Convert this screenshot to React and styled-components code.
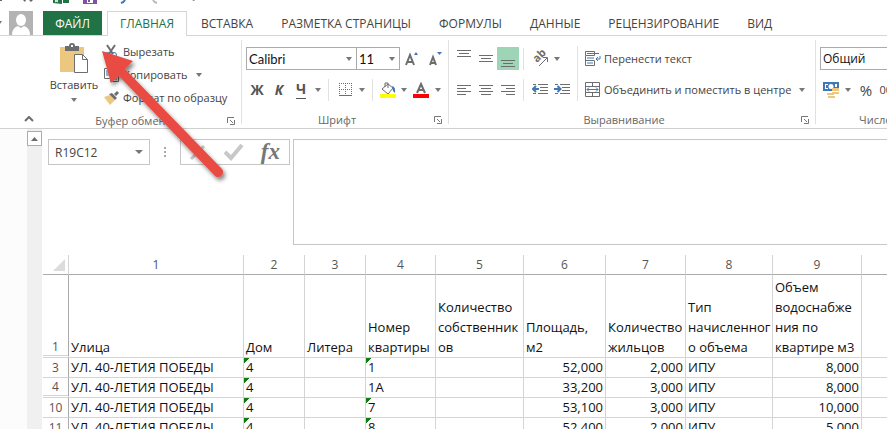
import React from 'react';
import styled, { createGlobalStyle } from 'styled-components';

const ui = '"Open Sans", "Noto Sans", sans-serif';
const gray = '#6d6d6d';
const blue = '#3f78b5';

const GlobalStyle = createGlobalStyle`
  * { box-sizing: border-box; }
  body { margin: 0; background: #fff; font-family: ${ui}; color: #444; }
  button, select, input, textarea { font: inherit; color: inherit; margin: 0; border-radius: 0; }
  button { border: 0; padding: 0; background: none; }
  svg { display: block; flex: none; }
`;

const Shell = styled.div`
  position: relative;
  display: flex;
  flex-direction: column;
  height: 100vh;
  overflow: hidden;
`;
const QuickAccess = styled.div`
  height: 11px;
  flex: none;
  overflow: hidden;
`;
const TabBar = styled.nav`
  display: flex;
  flex: none;
  height: 25px;
  border-bottom: 1px solid #d5d5d5;
  font-size: 12px;
  white-space: nowrap;
`;
const Account = styled.button`
  display: flex;
  align-items: flex-start;
  width: 43px;
  flex: none;
`;
const FileTab = styled.button`
  width: 59px;
  flex: none;
  background: #217346;
  color: #fff;
`;
const Tab = styled.button`
  flex: none;
  height: 25px;
  padding: 0 14px 1px;
  ${p => p.$active && `
    margin-left: 5px;
    width: 80px;
    padding: 0 0 2px;
    color: #217346;
    background: #fff;
    border: 1px solid #d5d5d5;
    border-bottom: 0;
  `}
`;
const Ribbon = styled.section`
  display: flex;
  flex: none;
  height: 93px;
  border-bottom: 1px solid #d0d0d0;
  font-size: 11px;
  white-space: nowrap;
  overflow: hidden;
`;
const CollapseSlot = styled.div`
  display: flex;
  align-items: flex-end;
  justify-content: flex-end;
  width: 42px;
  flex: none;
  padding: 0 8px 6px 0;
`;
const Group = styled.div`
  display: flex;
  flex-direction: column;
  flex: none;
  width: ${p => p.$width}px;
  margin: 4px 0;
  border-right: 1px solid #e1e1e1;
`;
const GroupBody = styled.div`
  display: flex;
  flex: 1;
  padding-left: 4px;
`;
const GroupFooter = styled.div`
  display: grid;
  grid-template-columns: 1fr 16px;
  align-items: center;
  height: 16px;
  color: #666;
  text-align: center;
`;
const Column = styled.div`
  display: flex;
  flex-direction: column;
`;
const Row = styled.div`
  display: flex;
  align-items: center;
  height: ${p => p.$height}px;
`;
const IconButton = styled.button`
  display: flex;
  align-items: center;
  justify-content: center;
  flex: none;
  width: ${p => p.$width || 22}px;
  height: 23px;
  background: ${p => (p.$on ? '#9fd5b7' : 'transparent')};
`;
const LabelButton = styled.button`
  display: flex;
  align-items: center;
  gap: 4px;
  height: 23px;
`;
const IconSlot = styled.span`
  display: flex;
  width: 15px;
`;
const PasteButton = styled.button`
  display: flex;
  flex-direction: column;
  align-items: center;
  width: 56px;
  padding-top: 3px;
  margin-right: 2px;
`;
const PasteLabel = styled.span`
  margin: 2px 0 4px;
  line-height: 18px;
`;
const Divider = styled.span`
  width: 1px;
  height: 22px;
  margin: 0 5px 0 4px;
  background: #e1e1e1;
`;
const WrapRule = styled.span`
  width: 1px;
  height: 55px;
  margin: 6px 7px 0 4px;
  background: #e1e1e1;
`;
const Letter = styled.span`
  font-size: 14px;
  line-height: 18px;
  font-weight: 700;
  font-style: ${p => (p.$italic ? 'italic' : 'normal')};
  border-bottom: ${p => (p.$underline ? '1px solid #555' : '0')};
  color: #555;
`;
const Percent = styled.span`font-size: 15px;`;
const Zeros = styled.span`font-size: 11px;`;
const Combo = styled.div`
  display: grid;
  align-items: center;
  flex: none;
  width: ${p => p.$width}px;
  height: 23px;
  border: 1px solid #ababab;
  margin-right: -1px;
  > * { grid-area: 1 / 1; }
  > svg { justify-self: end; margin-right: 4px; pointer-events: none; }
`;
const ComboSelect = styled.select`
  appearance: none;
  width: 100%;
  height: 21px;
  border: 0;
  padding: 0 2px;
  background: #fff;
  color: #111;
  font-family: ${p => (p.$wide ? ui : 'Lato, "Open Sans", sans-serif')};
  font-size: ${p => (p.$wide ? 12 : 13)}px;
`;
const Work = styled.main`
  display: flex;
  flex: 1;
  min-height: 0;
`;
const Gutter = styled.div`
  width: 27px;
  flex: none;
  background: #fcfcfc;
`;
const Scroller = styled.div`
  width: 15px;
  flex: none;
  padding-top: 2px;
  background: #f0f0f0;
`;
const ScrollUp = styled.button`
  display: flex;
  align-items: center;
  justify-content: center;
  width: 15px;
  height: 15px;
  background: #fff;
  border: 1px solid #ababab;
`;
const Book = styled.div`
  flex: 1;
  min-width: 0;
`;
const FormulaBar = styled.div`
  display: flex;
  align-items: flex-start;
  padding: 10px 0 10px 6px;
`;
const NameBox = styled.div`
  display: flex;
  align-items: center;
  width: 102px;
  height: 26px;
  flex: none;
  padding-right: 6px;
  border: 1px solid #c6c6c6;
`;
const NameInput = styled.input`
  flex: 1;
  min-width: 0;
  border: 0;
  padding: 0 6px;
  background: none;
  font-size: 12px;
`;
const Grip = styled.span`
  display: flex;
  justify-content: center;
  width: 30px;
  padding-top: 8px;
  flex: none;
`;
const FormulaButtons = styled.div`
  display: flex;
  align-items: center;
  justify-content: space-between;
  width: 110px;
  height: 26px;
  flex: none;
  padding: 0 9px 0 7px;
  margin-right: 3px;
  border: 1px solid #c6c6c6;
`;
const FxButton = styled.button`
  font: italic 700 23px/22px "Liberation Serif", serif;
  color: #777;
`;
const FormulaText = styled.textarea`
  flex: 1;
  min-width: 0;
  height: 106px;
  border: 1px solid #c6c6c6;
  border-right: 0;
  resize: none;
`;
const Sheet = styled.table`
  width: 100%;
  margin-left: 1px;
  table-layout: fixed;
  border-collapse: separate;
  border-spacing: 0;
  font-size: 13px;
  color: #111;
`;
const Col = styled.col`width: ${p => (p.$width ? `${p.$width}px` : 'auto')};`;
const ColHead = styled.th`
  height: 20px;
  padding: 0;
  font-size: 12px;
  line-height: 19px;
  font-weight: 400;
  color: #555;
  border-right: 1px solid #d4d4d4;
  border-bottom: 1px solid #ababab;
`;
const Corner = styled(ColHead)`
  > svg { margin: 0 3px 0 auto; }
`;
const RowHead = styled.th`
  padding: 0;
  vertical-align: bottom;
  font-size: 12px;
  font-weight: 400;
  color: #555;
  border-right: 1px solid #ababab;
  border-bottom: ${p => (p.$gap ? '3px double' : '1px solid')} #d4d4d4;
  line-height: ${p => (p.$gap ? 17 : 19)}px;
`;
const Cell = styled.td`
  height: ${p => (p.$tall ? 83 : 20)}px;
  padding: 0 2px;
  vertical-align: bottom;
  line-height: ${p => (p.$tall ? 20 : 19)}px;
  text-align: ${p => (p.$num ? 'right' : 'left')};
  white-space: ${p => (p.$tall ? 'pre' : 'nowrap')};
  border-right: 1px solid #d4d4d4;
  border-bottom: 1px solid #d4d4d4;
  background: ${p => (p.$flag ? 'linear-gradient(135deg, #107c10 4px, transparent 4px) no-repeat' : 'none')};
`;
const Pointer = styled.svg`
  position: absolute;
  left: 94px;
  top: 44px;
  pointer-events: none;
`;

const Caret = () => (
  <svg width="6" height="4" viewBox="0 0 6 4"><path d="M0 0h6L3 4z" fill="#777" /></svg>
);
const Footer = ({ children }) => (
  <GroupFooter>
    <span>{children}</span>
    <IconButton $width={12} aria-label="Параметры группы">
      <svg width="8" height="8" viewBox="0 0 8 8"><path d="M.5 6V.5H7M3 3l3 3M7.5 3v4.500H3" fill="none" stroke="#777" /></svg>
    </IconButton>
  </GroupFooter>
);
const Lines = ({ rows, top = 0 }) => (
  <svg width="14" height="18" viewBox="0 0 14 18">
    {rows.map(([x, w], i) => <path key={i} d={`M${x} ${top + i * 3 + 0.5}h${w}`} stroke={gray} />)}
  </svg>
);
const Indent = ({ right }) => (
  <svg width="16" height="11" viewBox="0 0 16 11">
    <path d="M1 .5h3M6 .5h10M8 3.500h8M8 6.500h8M1 9.500h3M6 9.500h10" stroke={gray} />
    <path d={right ? 'M0 5h6M3.500 2L6.500 5 3.500 8' : 'M1 5h6M4 2L1 5l3 3'} fill="none" stroke={blue} strokeWidth="2" />
  </svg>
);
const edge = [[0, 14], [2, 10], [0, 14]];
const justify = [
  ['По левому краю', [[0, 14], [0, 9], [0, 14], [0, 9]]],
  ['По центру', [[0, 14], [2, 10], [0, 14], [2, 10]]],
  ['По правому краю', [[0, 14], [5, 9], [0, 14], [5, 9]]],
];

const tabs = ['ВСТАВКА', 'РАЗМЕТКА СТРАНИЦЫ', 'ФОРМУЛЫ', 'ДАННЫЕ', 'РЕЦЕНЗИРОВАНИЕ', 'ВИД'];
const widths = [26, 175, 61, 61, 70, 88, 82, 80, 87, 89, 0];
const heads = ['Улица', 'Дом', 'Литера', 'Номер\nквартиры', 'Количество\nсобственник\nов', 'Площадь,\nм2', 'Количество\nжильцов', 'Тип\nначисленног\nо объема', 'Объем\nводоснабже\nния по\nквартире м3', ''];
const rows = [
  [3, '1', '52,000', '2,000', '8,000'],
  [4, '1А', '33,200', '3,000', '8,000'],
  [10, '7', '53,100', '3,000', '10,000'],
  [11, '8', '52,400', '2,000', '5,000'],
];

export default function App() {
  return (
    <Shell>
      <GlobalStyle />
      <QuickAccess>
        <svg width="210" height="11" viewBox="0 0 210 11">
          <path d="M0 0h2v1H0zM23 0h3l-1 2zM29 0h4l-2 2z" fill="#666" />
          <path d="M53 0h9v4l-9-1zM63 0h6v3h-6z" fill="#217346" />
          <path d="M55 0l3 2M58 0l-3 2" stroke="#fff" />
          <path d="M83 0h14v4H83z" fill="#8151a5" /><path d="M87 0h6v3h-6z" fill="#fff" /><path d="M88 0h2v2h-2z" fill="#8151a5" />
          <path d="M125 0q-1 2-4 3" stroke={blue} strokeWidth="2" fill="none" />
          <path d="M153 0q1 2 4 3" stroke="#bbb" strokeWidth="2" fill="none" />
          <path d="M192 0h3l-1 1z" fill="#777" />
        </svg>
      </QuickAccess>

      <TabBar aria-label="Лента">
        <Account aria-label="Учетная запись">
          <svg width="33" height="24" viewBox="0 0 33 24">
            <path d="M0 10h2l-2 3z" fill="#777" />
            <path d="M9 0h24v24H9z" fill="#b3b3b3" />
            <ellipse cx="21" cy="9" rx="5" ry="6" fill="#fff" />
            <path d="M12 24q0-7 6-9l3 2 3-2q6 2 6 9z" fill="#fff" />
          </svg>
        </Account>
        <FileTab>ФАЙЛ</FileTab>
        <Tab $active>ГЛАВНАЯ</Tab>
        {tabs.map(t => <Tab key={t}>{t}</Tab>)}
      </TabBar>

      <Ribbon>
        <CollapseSlot>
          <button aria-label="Свернуть ленту">
            <svg width="10" height="6" viewBox="0 0 10 6"><path d="M1 5l4-4 4 4" fill="none" stroke={gray} strokeWidth="2" /></svg>
          </button>
        </CollapseSlot>

        <Group $width={200}>
          <GroupBody>
            <PasteButton>
              <svg width="28" height="31" viewBox="1 0 28 31">
                <path d="M1 4h24v25H1z" fill="#ecc780" />
                <path d="M6 8V3h4q0-3 3-3t3 3h4v5z" fill={gray} /><path d="M12 2h2v2h-2z" fill="#fff" />
                <path d="M15.500 11.500h8l5 5v13h-13z" fill="#fff" stroke={gray} /><path d="M23.500 11.500v5h5" fill="none" stroke={gray} />
              </svg>
              <PasteLabel>Вставить</PasteLabel>
              <Caret />
            </PasteButton>
            <Column>
              <LabelButton>
                <IconSlot>
                  <svg width="14" height="15" viewBox="0 0 14 15">
                    <path d="M3 1l6 9M11 1L5 10" stroke={gray} strokeWidth="2" />
                    <circle cx="3.500" cy="11" r="2.500" fill="none" stroke={blue} /><circle cx="10" cy="11" r="2.500" fill="none" stroke={blue} />
                  </svg>
                </IconSlot>
                Вырезать
              </LabelButton>
              <Row $height={23}>
                <LabelButton>
                  <IconSlot>
                    <svg width="15" height="14" viewBox="0 0 15 14">
                      <path d="M.5.5h6l2 2v8h-8z" fill="#fff" stroke={gray} /><path d="M2 3h4M2 5h4M2 7h4" stroke={blue} />
                      <path d="M6.500 3.500h5l3 3v7h-8z" fill="#fff" stroke={gray} /><path d="M8 7h4M8 9h5M8 11h5" stroke={blue} />
                    </svg>
                  </IconSlot>
                  Копировать
                </LabelButton>
                <IconButton aria-label="Варианты копирования"><Caret /></IconButton>
              </Row>
              <LabelButton>
                <IconSlot>
                  <svg width="15" height="14" viewBox="0 0 15 14">
                    <path d="M0 6l6-2 5 5-5 5z" fill="#ecc780" /><path d="M5 3l3-1 5 5-2 2zM10 3l3-3 2 2-3 3z" fill={gray} />
                  </svg>
                </IconSlot>
                Формат по образцу
              </LabelButton>
            </Column>
          </GroupBody>
          <Footer>Буфер обмена</Footer>
        </Group>

        <Group $width={207}>
          <GroupBody>
            <Column>
              <Row $height={37}>
                <Combo $width={111}>
                  <ComboSelect aria-label="Шрифт"><option>Calibri</option></ComboSelect><Caret />
                </Combo>
                <Combo $width={44}>
                  <ComboSelect aria-label="Размер шрифта"><option>11</option></ComboSelect><Caret />
                </Combo>
                <IconButton $width={25} aria-label="Увеличить размер шрифта">
                  <svg width="14" height="15" viewBox="0 0 14 15"><path d="M1 14L5 4l4 10M2.500 11h5" fill="none" stroke={gray} strokeWidth="2" /><path d="M9 4l2-3 2 3z" fill={blue} /></svg>
                </IconButton>
                <IconButton $width={22} aria-label="Уменьшить размер шрифта">
                  <svg width="14" height="15" viewBox="0 0 14 15"><path d="M2 14l3-8 3 8M3 12h4" fill="none" stroke={gray} strokeWidth="2" /><path d="M9 1h5l-2.500 3z" fill={blue} /></svg>
                </IconButton>
              </Row>
              <Row $height={25}>
                <IconButton aria-label="Полужирный"><Letter>Ж</Letter></IconButton>
                <IconButton aria-label="Курсив"><Letter $italic>К</Letter></IconButton>
                <IconButton aria-label="Подчеркнутый"><Letter $underline>Ч</Letter></IconButton>
                <IconButton $width={12} aria-label="Вид подчеркивания"><Caret /></IconButton>
                <Divider />
                <IconButton $width={22} aria-label="Границы">
                  <svg width="13" height="13" viewBox="0 0 13 13"><path d="M0 .5h13M0 6.500h13M.5 0v12M6.500 0v12M12.500 0v12" stroke={gray} strokeDasharray="1 1" /><path d="M0 12.500h13" stroke={gray} /></svg>
                </IconButton>
                <IconButton $width={12} aria-label="Вид границ"><Caret /></IconButton>
                <Divider />
                <IconButton $width={20} aria-label="Цвет заливки">
                  <svg width="16" height="16" viewBox="0 0 16 16"><path d="M2 7l6-5 5 4-5 6z" fill="#fff" stroke={gray} /><path d="M5 5V1h3v5" fill="none" stroke={gray} /><path d="M12 4q4 1 3 7l-2-2z" fill={blue} /><path d="M0 12h16v4H0z" fill="#ff0" /></svg>
                </IconButton>
                <IconButton $width={12} aria-label="Палитра заливки"><Caret /></IconButton>
                <IconButton $width={22} aria-label="Цвет текста">
                  <svg width="16" height="16" viewBox="0 0 16 16"><path d="M4 11l4-9 4 9M5.500 8h5" fill="none" stroke={gray} strokeWidth="2" /><path d="M0 12h16v4H0z" fill="red" /></svg>
                </IconButton>
                <IconButton $width={12} aria-label="Палитра текста"><Caret /></IconButton>
              </Row>
            </Column>
          </GroupBody>
          <Footer>Шрифт</Footer>
        </Group>

        <Group $width={367}>
          <GroupBody>
            <Column>
              <Row $height={37}>
                <IconButton aria-label="По верхнему краю"><Lines rows={edge} /></IconButton>
                <IconButton aria-label="По середине"><Lines top={5} rows={edge} /></IconButton>
                <IconButton $on aria-label="По нижнему краю"><Lines top={10} rows={edge} /></IconButton>
                <Divider />
                <IconButton aria-label="Ориентация">
                  <svg width="18" height="17" viewBox="0 0 18 17">
                    <text x="0" y="0" transform="translate(6 13) rotate(-45)" fontSize="11" fontWeight="700" fill={gray}>ab</text>
                    <path d="M8 16l8-8M12 7.500h4.500V12" fill="none" stroke={gray} />
                  </svg>
                </IconButton>
                <IconButton $width={12} aria-label="Вид ориентации"><Caret /></IconButton>
              </Row>
              <Row $height={25}>
                {justify.map(([name, lines]) => <IconButton key={name} aria-label={name}><Lines top={4} rows={lines} /></IconButton>)}
                <Divider />
                <IconButton aria-label="Уменьшить отступ"><Indent /></IconButton>
                <IconButton aria-label="Увеличить отступ"><Indent right /></IconButton>
              </Row>
            </Column>
            <WrapRule />
            <Column>
              <Row $height={37}>
                <LabelButton>
                  <IconSlot>
                    <svg width="16" height="15" viewBox="0 0 16 15"><path d="M.5.5h9v4h-9zM.5 5v9.500h9V10M.5 9.500h9" fill="none" stroke={gray} /><path d="M2 2.500h12M2 7h7M2 12h6M15 5v3h-4M13 6l-2 2 2 2" fill="none" stroke={blue} /></svg>
                  </IconSlot>
                  Перенести текст
                </LabelButton>
              </Row>
              <Row $height={25}>
                <LabelButton>
                  <IconSlot>
                    <svg width="15" height="15" viewBox="0 0 15 15"><path d="M.5.5h14v14H.5zM0 4.500h15M0 10.500h15M7.500 0v4M7.500 11v4" fill="none" stroke={gray} /><path d="M2 7.500h11M4 5.500l-2 2 2 2M11 5.500l2 2-2 2" fill="none" stroke={blue} /></svg>
                  </IconSlot>
                  Объединить и поместить в центре
                </LabelButton>
                <IconButton aria-label="Варианты объединения"><Caret /></IconButton>
              </Row>
            </Column>
          </GroupBody>
          <Footer>Выравнивание</Footer>
        </Group>

        <Group $width={136}>
          <GroupBody>
            <Column>
              <Row $height={37}>
                <Combo $width={116}><ComboSelect $wide aria-label="Числовой формат"><option>Общий</option></ComboSelect><Caret /></Combo>
              </Row>
              <Row $height={25}>
                <IconButton aria-label="Денежный формат">
                  <svg width="17" height="16" viewBox="0 0 17 16"><path d="M0 0h16v9H0z" fill={blue} /><path d="M2 2h3v1H3v3h2v1H2zM14 2v3h-2V2z" fill="#fff" /><circle cx="8" cy="4.500" r="2.500" fill="#fff" /><path d="M9 6h7v3H9zM9 10h7v2H9zM4 11h7v2H4zM5 14h7v2H5z" fill="#ecc780" /></svg>
                </IconButton>
                <IconButton $width={12} aria-label="Валюта"><Caret /></IconButton>
                <IconButton $width={24}><Percent>%</Percent></IconButton>
                <IconButton><Zeros>000</Zeros></IconButton>
              </Row>
            </Column>
          </GroupBody>
          <Footer>Число</Footer>
        </Group>
      </Ribbon>

      <Work>
        <Gutter />
        <Scroller>
          <ScrollUp aria-label="Вверх"><svg width="7" height="4" viewBox="0 0 7 4"><path d="M0 4h7L3.500 0z" fill={gray} /></svg></ScrollUp>
        </Scroller>
        <Book>
          <FormulaBar>
            <NameBox>
              <NameInput aria-label="Имя ячейки" defaultValue="R19C12" />
              <svg width="8" height="5" viewBox="0 0 8 5"><path d="M0 0h8L4 4z" fill="#777" /></svg>
            </NameBox>
            <Grip><svg width="2" height="11" viewBox="0 0 2 11"><path d="M0 0h2v2H0zM0 4h2v2H0zM0 8h2v2H0z" fill="#aaa" /></svg></Grip>
            <FormulaButtons>
              <button aria-label="Отмена"><svg width="20" height="18" viewBox="0 0 20 18"><path d="M3 16L16 3M4 4l11 11" stroke="#c8c8c8" strokeWidth="3" /></svg></button>
              <button aria-label="Ввод"><svg width="20" height="18" viewBox="0 0 20 18"><path d="M1 9l6 6L18 2" fill="none" stroke="#c8c8c8" strokeWidth="4" /></svg></button>
              <FxButton aria-label="Вставить функцию">fx</FxButton>
            </FormulaButtons>
            <FormulaText aria-label="Строка формул" />
          </FormulaBar>
          <Sheet>
            <colgroup>{widths.map((w, i) => <Col key={i} $width={w} />)}</colgroup>
            <thead>
              <tr>
                <Corner><svg width="12" height="12" viewBox="0 0 12 12"><path d="M12 0v12H0z" fill="#dcdcdc" /></svg></Corner>
                {heads.map((h, i) => <ColHead key={i}>{i < 9 ? i + 1 : ''}</ColHead>)}
              </tr>
            </thead>
            <tbody>
              <tr>
                <RowHead $gap>1</RowHead>
                {heads.map((h, i) => <Cell key={i} $tall>{h}</Cell>)}
              </tr>
              {rows.map(([n, flat, area, people, volume]) => (
                <tr key={n}>
                  <RowHead $gap={n === 4}>{n}</RowHead>
                  <Cell>УЛ. 40-ЛЕТИЯ ПОБЕДЫ</Cell>
                  <Cell $flag>4</Cell>
                  <Cell />
                  <Cell $flag={flat !== '1А'}>{flat}</Cell>
                  <Cell />
                  <Cell $num>{area}</Cell>
                  <Cell $num>{people}</Cell>
                  <Cell>ИПУ</Cell>
                  <Cell $num>{volume}</Cell>
                  <Cell />
                </tr>
              ))}
            </tbody>
          </Sheet>
        </Book>
      </Work>

      <Pointer width="140" height="144" viewBox="0 0 140 144" aria-hidden="true">
        <defs><filter id="shade" x="-20%" y="-20%" width="150%" height="150%"><feDropShadow dx="2" dy="3" stdDeviation="2" floodOpacity="0.5" /></filter></defs>
        <path d="M8 7l31 10-8 8L128 125a5 5 0 0 1-7 7L25 32l-8 7z" fill="#e94b43" filter="url(#shade)" />
      </Pointer>
    </Shell>
  );
}
